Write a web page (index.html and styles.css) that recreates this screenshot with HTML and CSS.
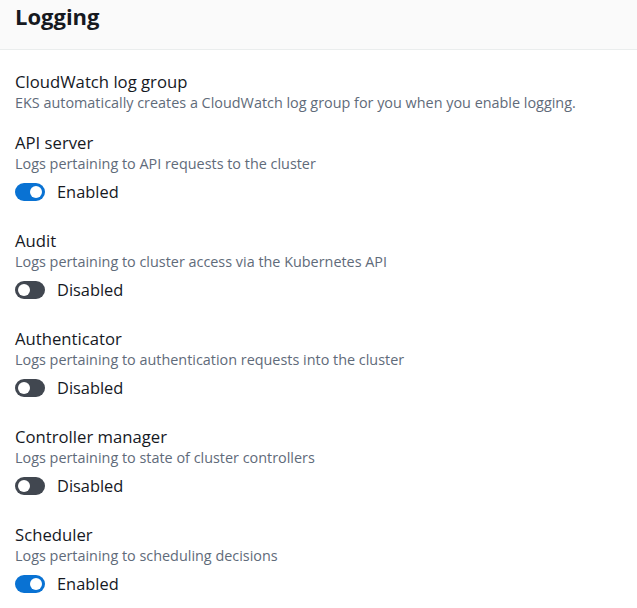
FILE: index.html
```html
<!DOCTYPE html>
<html>
<head>
<meta charset="utf-8">
<link rel="stylesheet" href="styles.css">
</head>
<body>
<div class="panel">
  <div class="header"><h2 class="title">Logging</h2></div>
  <div class="content">
    <div class="field">
      <div class="label">CloudWatch log group</div>
      <div class="desc">EKS automatically creates a CloudWatch log group for you when you enable logging.</div>
    </div>
    <div class="field">
      <div class="label">API server</div>
      <div class="desc">Logs pertaining to API requests to the cluster</div>
      <div class="toggle-row"><span class="toggle on"><span class="knob"></span></span><span class="state">Enabled</span></div>
    </div>
    <div class="field">
      <div class="label">Audit</div>
      <div class="desc">Logs pertaining to cluster access via the Kubernetes API</div>
      <div class="toggle-row"><span class="toggle"><span class="knob"></span></span><span class="state">Disabled</span></div>
    </div>
    <div class="field">
      <div class="label">Authenticator</div>
      <div class="desc">Logs pertaining to authentication requests into the cluster</div>
      <div class="toggle-row"><span class="toggle"><span class="knob"></span></span><span class="state">Disabled</span></div>
    </div>
    <div class="field">
      <div class="label">Controller manager</div>
      <div class="desc">Logs pertaining to state of cluster controllers</div>
      <div class="toggle-row"><span class="toggle"><span class="knob"></span></span><span class="state">Disabled</span></div>
    </div>
    <div class="field">
      <div class="label">Scheduler</div>
      <div class="desc">Logs pertaining to scheduling decisions</div>
      <div class="toggle-row"><span class="toggle on"><span class="knob"></span></span><span class="state">Enabled</span></div>
    </div>
  </div>
</div>
</body>
</html>
```
FILE: styles.css
```css
html, body {
  margin: 0;
  padding: 0;
  background: #ffffff;
}
body {
  font-family: "Open Sans", "Noto Sans", sans-serif;
  color: #16191f;
}
.header {
  background: #fafafa;
  border-bottom: 1px solid #eaeded;
  height: 49px;
  padding: 0 15px;
  display: flex;
  align-items: center;
}
.title {
  margin: 0;
  font-size: 22px;
  font-weight: 700;
  line-height: 30px;
  margin-top: -17px;
}
.content {
  padding: 21px 15px 0;
  display: flex;
  flex-direction: column;
  gap: 19px;
}
.field {
  display: flex;
  flex-direction: column;
}
.label {
  font-size: 16.7px;
  line-height: 22px;
}
.desc {
  font-size: 14.4px;
  line-height: 20px;
  color: #5f6b7a;
}
.toggle-row {
  display: flex;
  align-items: center;
  gap: 12px;
  margin-top: 6px;
  height: 24px;
  padding-bottom: 7px;
}
.toggle {
  width: 30px;
  height: 18px;
  border-radius: 9px;
  background: #414750;
  position: relative;
  display: inline-block;
}
.toggle.on {
  background: #0972d3;
}
.knob {
  position: absolute;
  top: 3px;
  left: 3px;
  width: 12px;
  height: 12px;
  border-radius: 50%;
  background: #fff;
}
.toggle.on .knob {
  left: 15px;
}
.state {
  font-size: 16.4px;
  line-height: 22px;
}
```
